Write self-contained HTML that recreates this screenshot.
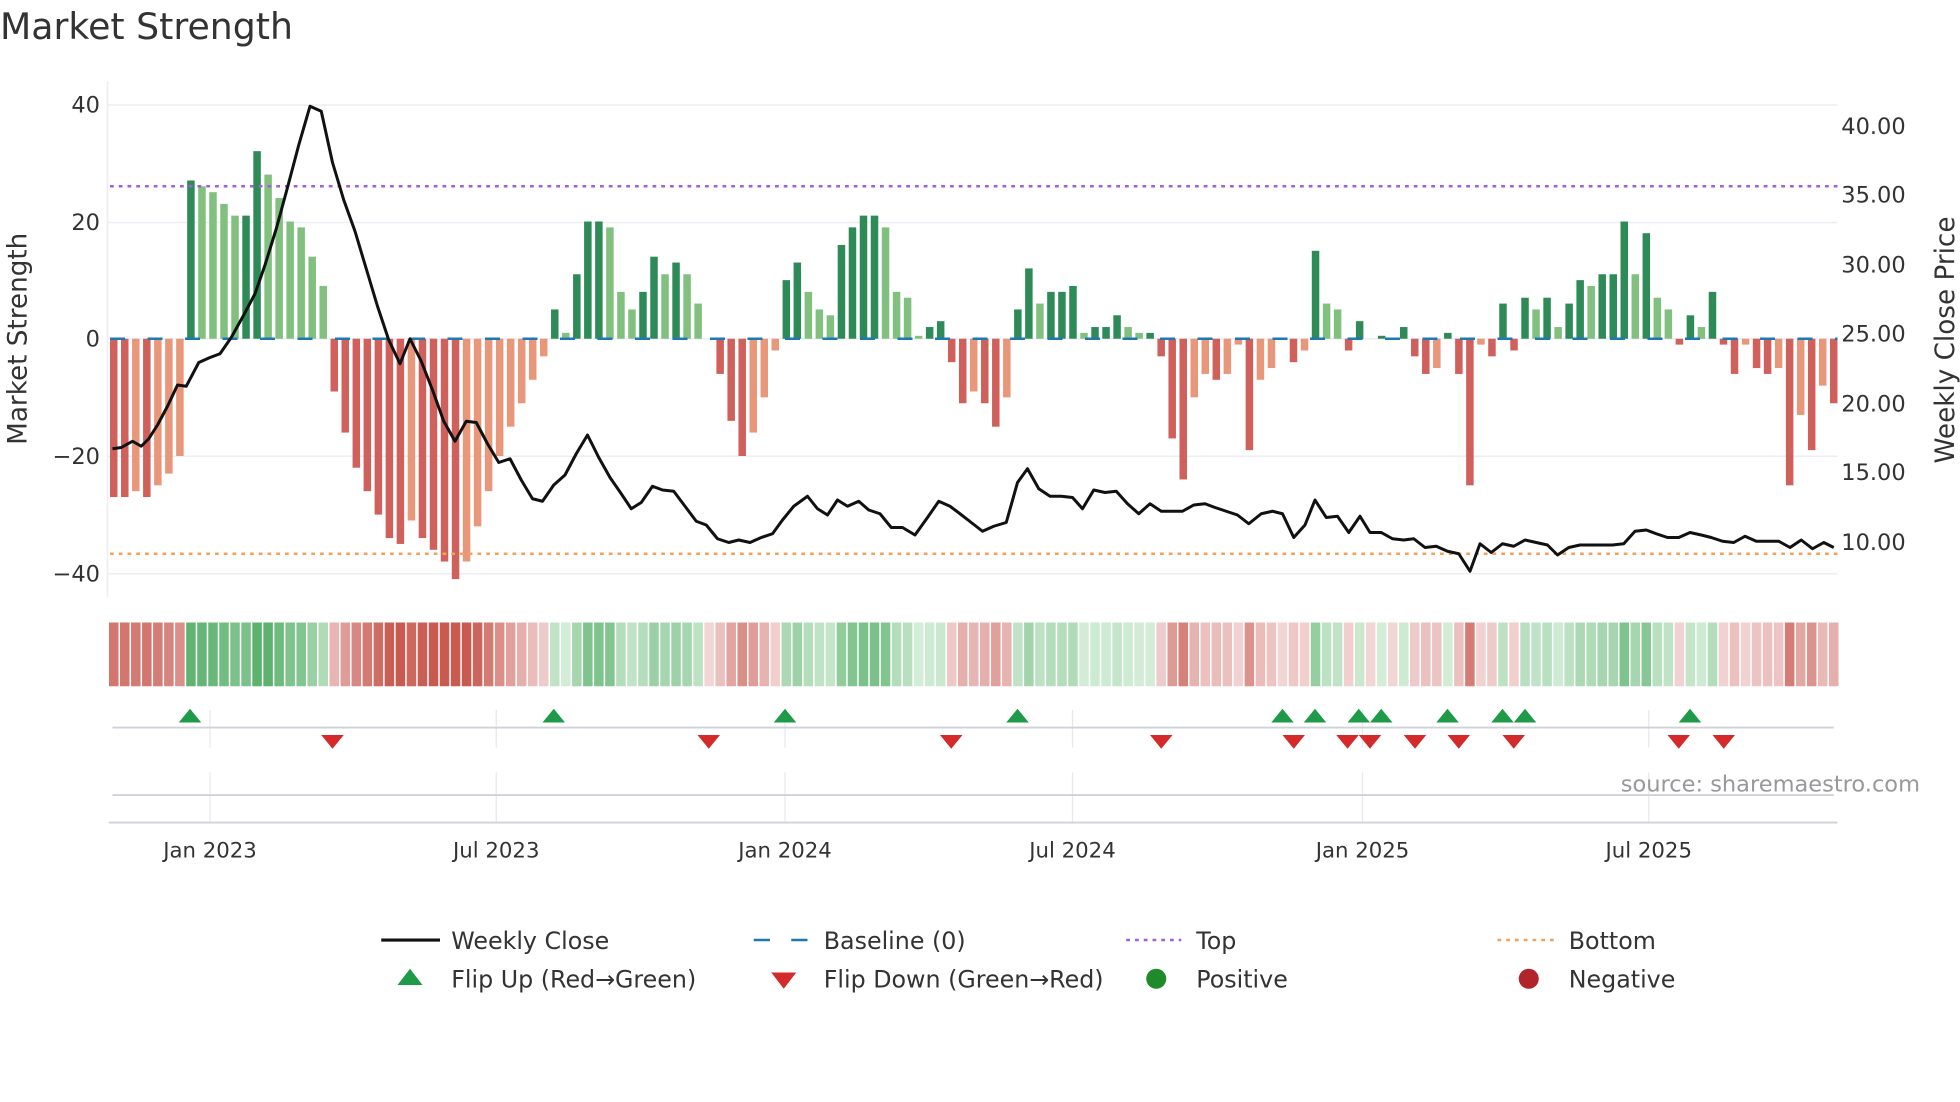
<!DOCTYPE html>
<html><head><meta charset="utf-8"><style>
html,body{margin:0;padding:0;background:#fff;}
svg{display:block;font-family:"DejaVu Sans","Liberation Sans",sans-serif;}
</style></head><body>
<svg id="s" width="1960" height="1102" viewBox="0 0 1568 881.6" xmlns="http://www.w3.org/2000/svg">
<rect width="1568" height="881.6" fill="#fff"/>
<text x="0" y="31" font-size="29" fill="#333">Market Strength</text>
<g stroke="#eceef3" stroke-width="1.2">
<line x1="86" y1="84" x2="1470" y2="84"/><line x1="86" y1="178" x2="1470" y2="178"/>
<line x1="86" y1="271" x2="1470" y2="271"/><line x1="86" y1="365" x2="1470" y2="365"/>
<line x1="86" y1="459" x2="1470" y2="459"/><line x1="86" y1="65" x2="86" y2="478"/>
</g>
<g font-size="18" fill="#333" text-anchor="end">
<text x="80" y="90">40</text><text x="80" y="184">20</text><text x="80" y="277">0</text>
<text x="80" y="371">−20</text><text x="80" y="465">−40</text>
</g>
<g font-size="18" fill="#333">
<text x="1473" y="107">40.00</text><text x="1473" y="162">35.00</text><text x="1473" y="218">30.00</text>
<text x="1473" y="273">25.00</text><text x="1473" y="329">20.00</text><text x="1473" y="384">15.00</text>
<text x="1473" y="440">10.00</text>
</g>
<text transform="translate(21,271) rotate(-90)" font-size="21" fill="#333" text-anchor="middle">Market Strength</text>
<text transform="translate(1563,272) rotate(-90)" font-size="21" fill="#333" text-anchor="middle">Weekly Close Price</text>
<g id="bars"></g>
<line x1="88" y1="271" x2="1470" y2="271" stroke="#1f77b4" stroke-width="2" stroke-dasharray="12,18"/>
<line x1="88" y1="149" x2="1470" y2="149" stroke="#a05fd8" stroke-width="2" stroke-dasharray="3,4"/>
<line x1="88" y1="443" x2="1470" y2="443" stroke="#f4a15a" stroke-width="2" stroke-dasharray="3,4"/>
<polyline id="price" fill="none" stroke="#111" stroke-width="2.4" stroke-linejoin="round"/>
<g id="heat"></g>
<g stroke="#e6e8ee" stroke-width="1">
<line x1="168" y1="568" x2="168" y2="598"/><line x1="397" y1="568" x2="397" y2="598"/>
<line x1="628" y1="568" x2="628" y2="598"/><line x1="858" y1="568" x2="858" y2="598"/>
<line x1="1090" y1="568" x2="1090" y2="598"/><line x1="1319" y1="568" x2="1319" y2="598"/>
<line x1="168" y1="618" x2="168" y2="658"/><line x1="397" y1="618" x2="397" y2="658"/>
<line x1="628" y1="618" x2="628" y2="658"/><line x1="858" y1="618" x2="858" y2="658"/>
<line x1="1090" y1="618" x2="1090" y2="658"/><line x1="1319" y1="618" x2="1319" y2="658"/>
</g>
<line x1="90" y1="582" x2="1467" y2="582" stroke="#cfd2d8" stroke-width="1.5"/>
<line x1="90" y1="636" x2="1467" y2="636" stroke="#cfd2d8" stroke-width="1.5"/>
<line x1="87" y1="658" x2="1470" y2="658" stroke="#cfd2d8" stroke-width="1.5"/>
<g id="marks"></g>
<text x="1536" y="633" font-size="18" fill="#999" text-anchor="end">source: sharemaestro.com</text>
<g font-size="17" fill="#333" text-anchor="middle">
<text x="168" y="686">Jan 2023</text><text x="397" y="686">Jul 2023</text><text x="628" y="686">Jan 2024</text>
<text x="858" y="686">Jul 2024</text><text x="1090" y="686">Jan 2025</text><text x="1319" y="686">Jul 2025</text>
</g>
<g font-size="19" fill="#333">
<line x1="305" y1="752" x2="352" y2="752" stroke="#111" stroke-width="2.5"/>
<text x="361" y="759">Weekly Close</text>
<line x1="603" y1="752" x2="647" y2="752" stroke="#1f77b4" stroke-width="2" stroke-dasharray="13,17"/>
<text x="659" y="759">Baseline (0)</text>
<line x1="901" y1="752" x2="945" y2="752" stroke="#a05fd8" stroke-width="2" stroke-dasharray="3,4"/>
<text x="957" y="759">Top</text>
<line x1="1198" y1="752" x2="1243" y2="752" stroke="#f4a15a" stroke-width="2" stroke-dasharray="3,4"/>
<text x="1255" y="759">Bottom</text>
<polygon points="318,788 338,788 328,775" fill="#1e9a48"/>
<text x="361" y="790">Flip Up (Red→Green)</text>
<polygon points="617,778 637,778 627,791" fill="#d42a2a"/>
<text x="659" y="790">Flip Down (Green→Red)</text>
<circle cx="925" cy="783" r="8" fill="#1f8a2a"/>
<text x="957" y="790">Positive</text>
<circle cx="1223" cy="783" r="8" fill="#b0242a"/>
<text x="1255" y="790">Negative</text>
</g>
</svg>
<script>
var v=[-27,-27,-26,-27,-25,-23,-20,27,26,25,23,21,21,32,28,24,20,19,14,9,
-9,-16,-22,-26,-30,-34,-35,-31,-34,-36,-38,-41,-38,-32,-26,-20,-15,-11,-7,-3,
5,1,11,20,20,19,8,5,8,14,11,13,11,6,0,-6,-14,-20,-16,-10,-2,
10,13,8,5,4,16,19,21,21,19,8,7,0.5,2,3,-4,-11,-9,-11,-15,-10,
5,12,6,8,8,9,1,2,2,4,2,1,1,-3,-17,-24,-10,-6,-7,-6,-1,-19,
-7,-5,0,-4,-2,15,6,5,-2,3,0,0.5,0,2,-3,-6,-5,1,-6,-25,-1,-3,6,-2,7,5,7,2,6,10,9,11,11,20,11,18,7,5,-1,4,2,8,-1,-6,-1,-5,-6,-5,-25,-13,-19,-8,-11];
var ns="http://www.w3.org/2000/svg",B=document.getElementById('bars'),H=document.getElementById('heat');
var n=v.length,step=(1467-91)/(n-1);
function mix(a,b,t){t=Math.max(0,Math.min(1,t));return 'rgb('+[0,1,2].map(function(k){return Math.round(a[k]+(b[k]-a[k])*t)}).join(',')+')';}
for(var i=0;i<n;i++){var x=91+i*step,val=v[i],prev=i?v[i-1]:0,c;
 if(val>=0)c=(val>=prev)?'#2e8b57':'#82c07f';else c=(val<=prev)?'#d0605c':'#e8977a';
 if(val!==0){var h=Math.abs(val)*4.69,r=document.createElementNS(ns,'rect');
 r.setAttribute('x',x-3);r.setAttribute('width',6);r.setAttribute('y',val>0?271-h:271);r.setAttribute('height',h);r.setAttribute('fill',c);B.appendChild(r);}
 var hc=val>0?mix([214,238,218],[92,178,110],val/28):mix([242,214,214],[200,90,80],Math.abs(val)/35);
 var q=document.createElementNS(ns,'rect');q.setAttribute('x',x-step/2+0.6);q.setAttribute('width',step-1.2);q.setAttribute('y',498);q.setAttribute('height',51);q.setAttribute('fill',hc);H.appendChild(q);}
document.getElementById('price').setAttribute('points',"90,359 97,358 106,353 113,357 119,351 126,340 134,325 142,308 149,309 159,290 168,286 176,283 185,270 195,252 204,235 212,212 221,183 230,150 239,116 248,85 257,89 266,130 275,160 284,185 293,215 302,245 311,272 320,291 328,271 337,289 346,312 355,337 364,353 373,337 381,338 390,355 399,370 408,367 417,384 426,399 434,401 443,388 452,380 461,363 470,348 479,366 488,382 497,395 505,407 513,402 522,389 530,392 539,393 548,405 557,417 565,420 574,431 583,434 591,432 600,434 609,430 618,427 626,416 635,405 646,397 654,407 662,412 670,400 678,405 687,401 695,408 704,411 713,422 722,422 732,428 742,414 751,401 760,405 768,411 777,418 786,425 795,421 805,418 814,386 822,375 831,391 840,397 849,397 858,398 866,407 875,392 884,394 893,393 902,403 911,411 920,403 929,409 937,409 946,409 955,404 964,403 972,406 981,409 990,412 999,419 1009,411 1018,409 1026,411 1035,430 1044,420 1052,400 1061,414 1070,413 1079,426 1088,413 1096,426 1105,426 1114,431 1123,432 1131,431 1140,438 1149,437 1158,441 1167,443 1176,457 1184,435 1193,442 1202,435 1211,437 1220,432 1229,434 1238,436 1246,444 1255,438 1264,436 1273,436 1282,436 1290,436 1299,435 1308,425 1317,424 1325,427 1334,430 1343,430 1352,426 1361,428 1369,430 1378,433 1387,434 1396,429 1405,433 1414,433 1423,433 1432,438 1441,432 1450,439 1459,434 1467,438");
var M=document.getElementById('marks');
[152,443,628,814,1026,1052,1087,1105,1158,1202,1220,1352].forEach(function(x){var p=document.createElementNS(ns,'polygon');p.setAttribute('points',(x-9)+',578 '+(x+9)+',578 '+x+',567');p.setAttribute('fill','#1e9a48');M.appendChild(p);});
[266,567,761,929,1035,1078,1096,1132,1167,1211,1343,1379].forEach(function(x){var p=document.createElementNS(ns,'polygon');p.setAttribute('points',(x-9)+',588 '+(x+9)+',588 '+x+',599');p.setAttribute('fill','#d42a2a');M.appendChild(p);});
</script>
</body></html>
